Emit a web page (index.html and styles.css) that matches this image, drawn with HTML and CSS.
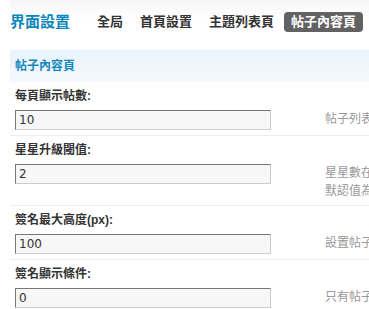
FILE: index.html
```html
<!DOCTYPE html>
<html lang="zh-Hant">
<head>
    <meta charset="UTF-8">
    <title>界面設置 - 帖子內容頁</title>
    <link rel="stylesheet" href="styles.css">
</head>
<body>
    <div class="page">
        <div class="header">
            <h2 class="title">界面設置</h2>
            <ul class="tabs">
                <li><a href="#">全局</a></li>
                <li><a href="#">首頁設置</a></li>
                <li><a href="#">主題列表頁</a></li>
                <li class="current"><a href="#">帖子內容頁</a></li>
            </ul>
        </div>

        <div class="section-title">帖子內容頁</div>

        <!-- 每頁顯示帖數 -->
        <div class="label-row">每頁顯示帖數:</div>
        <div class="field-row">
            <input class="txt" type="text" value="10">
            <div class="desc">帖子列表中每頁顯示帖子數目，默認值為 10</div>
        </div>

        <div class="label-row">星星升級閾值:</div>
        <div class="field-row">
            <input class="txt" type="text" value="2">
            <div class="desc">星星數在達到此值時自動升級為月亮<br>默認值為 3，如設置為 0 則不升級</div>
        </div>

        <div class="label-row">簽名最大高度(px):</div>
        <div class="field-row">
            <input class="txt" type="text" value="100">
            <div class="desc">設置帖子中個人簽名的最大高度</div>
        </div>

        <div class="label-row">簽名顯示條件:</div>
        <div class="field-row">
            <input class="txt" type="text" value="0">
            <div class="desc">只有帖子數大於此值的用戶才顯示簽名</div>
        </div>
    </div>
</body>
</html>
```

FILE: styles.css
```css
body {
    margin: 0;
    background: #fff;
    overflow: hidden;
    font-family: "Liberation Sans", "Noto Sans CJK TC", sans-serif;
    font-size: 12px;
    color: #333;
}

.page {
    width: 720px;
    padding-left: 10px;
}

/* 頂部標題和標籤 */
.header {
    display: flex;
    align-items: center;
    height: 50px;
    background: linear-gradient(#f7f7f7, #fff 40%);
}

.title {
    margin: 0 20px 0 0;
    font-size: 15px;
    font-weight: bold;
    color: #0c87bb;
    line-height: 20px;
    position: relative;
    top: -3px;
}

.tabs {
    display: flex;
    gap: 3px;
    list-style: none;
    margin: 0;
    padding: 0;
    position: relative;
    top: -3px;
}

.tabs a {
    display: block;
    padding: 0 7px;
    height: 20px;
    line-height: 20px;
    font-size: 13px;
    font-weight: bold;
    color: #333;
    text-decoration: none;
    border-radius: 4px;
}

.tabs .current a {
    background: #626262;
    color: #fff;
}

.section-title {
    height: 32px;
    line-height: 32px;
    padding-left: 5px;
    background: linear-gradient(#eaf4fc, #f3f9fd);
    color: #1287bb;
    font-weight: bold;
}

/* 設置項 */
.label-row {
    padding: 6px 5px;
    line-height: 16px;
    font-weight: bold;
    color: #333;
}

.field-row {
    display: flex;
    align-items: flex-start;
    padding: 0 0 5px 5px;
    border-bottom: 1px solid #eee;
}

.txt {
    box-sizing: border-box;
    width: 256px;
    height: 20px;
    margin: 0 54px 0 0;
    padding: 0 3px;
    border: 1px solid;
    border-color: #777 #ccc #ccc #777;
    background: #f7f7f7;
    font-family: "DejaVu Sans", sans-serif;
    font-size: 12px;
    color: #333;
}

.desc {
    line-height: 18px;
    color: #999;
    white-space: nowrap;
}
```
